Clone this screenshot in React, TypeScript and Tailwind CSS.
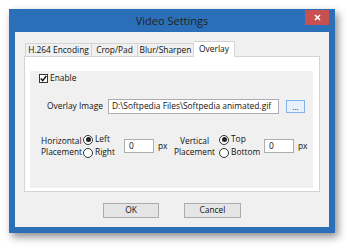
import React from 'react';

function Radio({ checked, label }: { checked: boolean; label: string }) {
  return (
    <div className="flex items-center gap-[2px] h-[11px] whitespace-nowrap">
      <span className="w-[10px] h-[10px] shrink-0 rounded-full border border-[#333] bg-white flex items-center justify-center">
        {checked && <span className="w-[5px] h-[5px] rounded-full bg-[#222]" />}
      </span>
      <span>{label}</span>
    </div>
  );
}

export default function App() {
  const tabs = ['H.264 Encoding', 'Crop/Pad', 'Blur/Sharpen'];
  return (
    <div className="w-[350px] h-[248px] bg-white pl-[9px] pt-[9px] text-[8.4px] text-[#111] whitespace-nowrap" style={{ fontFamily: '"Open Sans", "Noto Sans", sans-serif' }}>
      <div className="w-[326px] h-[224px] bg-[#2b6fb8] flex flex-col shadow-[3px_4px_8px_rgba(0,0,0,0.45)]">
        <div className="h-[23px] grid grid-cols-[1fr_auto_1fr] items-start">
          <div />
          <div className="text-[11px] leading-[24px] text-[#222]">Video Settings</div>
          <div className="flex justify-end pr-[6px] pt-[1px]">
            <div className="w-[24px] h-[15px] bg-[#c75050] flex items-center justify-center">
              <svg width="7" height="7" viewBox="0 0 7 7">
                <path d="M1 1L6 6M6 1L1 6" stroke="#fff" strokeWidth="1.6" />
              </svg>
            </div>
          </div>
        </div>
        <div className="flex-1 mx-[6px] mb-[6px] bg-[#f0f0f0] pt-[9px] pl-[9px] flex flex-col">
          <div className="flex items-end h-[15px] pl-[1px]">
            <div className="w-[67px] h-[13px] border border-b-0 border-[#d4d4d4] bg-[#f0f0f0] flex items-center justify-center leading-none">{tabs[0]}</div>
            <div className="w-[46px] h-[13px] border border-b-0 border-l-0 border-[#d4d4d4] bg-[#f0f0f0] flex items-center justify-center leading-none">{tabs[1]}</div>
            <div className="w-[56px] h-[13px] border border-b-0 border-l-0 border-[#d4d4d4] bg-[#f0f0f0] flex items-center justify-center leading-none">{tabs[2]}</div>
            <div className="w-[41px] h-[16px] border border-b-0 border-l-0 border-[#d4d4d4] bg-white flex items-center justify-center leading-none relative top-[1px] z-10">
              Overlay
            </div>
          </div>
          <div className="w-[296px] h-[136px] border border-[#d4d4d4] bg-white pt-[14px] pl-[5px]">
            <div className="w-[283px] h-[117px] bg-[#f0f0f0] pl-[9px] pt-[2px] flex flex-col">
              <div className="flex items-center gap-[2px] h-[10px]">
                <span className="w-[9px] h-[9px] border border-[#333] bg-white flex items-center justify-center">
                  <svg width="7" height="7" viewBox="0 0 7 7">
                    <path d="M0.8 3.6L2.7 5.6L6.3 1" stroke="#111" strokeWidth="1.5" fill="none" />
                  </svg>
                </span>
                <span>Enable</span>
              </div>
              <div className="flex items-center mt-[16px] pl-[8px]">
                <span className="w-[61px]">Overlay Image</span>
                <div className="w-[171px] h-[15px] border border-[#abadb3] bg-white flex items-center pl-[3px] overflow-hidden">D:\Softpedia Files\Softpedia animated.gif</div>
                <div className="ml-[7px] w-[19px] h-[13px] border border-[#7eb4ea] bg-[#e5f1fb] flex items-center justify-center leading-none text-[8px]">...</div>
              </div>
              <div className="flex items-center mt-[20px] pl-[2px]">
                <div className="flex flex-col items-start leading-[11px] w-[42px]">
                  <span>Horizontal</span>
                  <span>Placement</span>
                </div>
                <div className="flex flex-col gap-[2px] w-[41px]">
                  <Radio checked label="Left" />
                  <Radio checked={false} label="Right" />
                </div>
                <div className="w-[30px] h-[14px] border border-[#abadb3] bg-white flex items-center pl-[4px]">0</div>
                <span className="ml-[4px] w-[18px]">px</span>
                <div className="flex flex-col items-center leading-[11px] w-[37px]">
                  <span>Vertical</span>
                  <span>Placement</span>
                </div>
                <div className="flex flex-col gap-[2px] ml-[6px] w-[45px]">
                  <Radio checked label="Top" />
                  <Radio checked={false} label="Bottom" />
                </div>
                <div className="w-[30px] h-[14px] border border-[#abadb3] bg-white flex items-center pl-[4px]">0</div>
                <span className="ml-[4px]">px</span>
              </div>
            </div>
          </div>
          <div className="flex justify-center gap-[25px] mt-[11px] pr-[9px]">
            <div className="w-[56px] h-[15px] border border-[#acacac] bg-[#e5e5e5] flex items-center justify-center leading-none">OK</div>
            <div className="w-[57px] h-[15px] border border-[#acacac] bg-[#e5e5e5] flex items-center justify-center leading-none">Cancel</div>
          </div>
        </div>
      </div>
    </div>
  );
}
